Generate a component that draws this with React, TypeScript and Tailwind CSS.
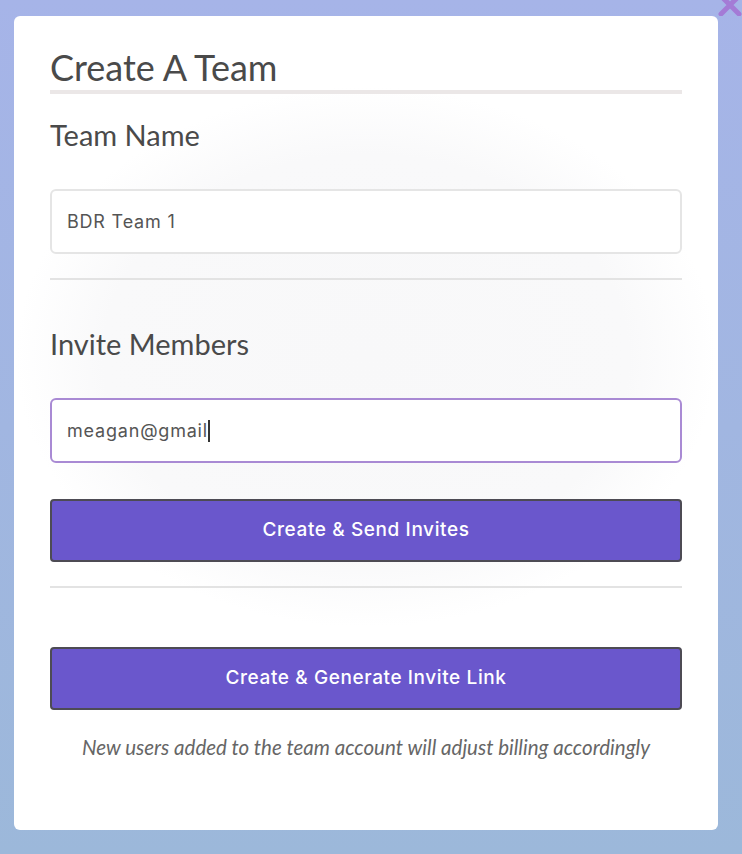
import React from "react";

export default function App() {
  return (
    <div className="relative w-[742px] h-[854px] overflow-hidden bg-[linear-gradient(to_bottom,#a6b4e8,#9cb8da)]">
      <svg className="absolute right-[0px] top-[-6px]" width="24" height="22" viewBox="0 0 24 22">
        <path d="M3 2 L21 20 M21 2 L3 20" stroke="#a47bd6" strokeWidth="5" strokeLinecap="round" />
      </svg>
      <div className="absolute left-[14px] top-[16px] w-[704px] h-[814px] rounded-[6px] bg-[radial-gradient(ellipse_350px_270px_at_50%_341px,#f8f8f9_0%,#f9f9fa_75%,#ffffff_100%)] px-[36px] pt-[30px] flex flex-col">
        <h1 className="font-['Lato',sans-serif] text-[36px] leading-[42px] text-[#4a4a4a]">Create A Team</h1>
        <div className="mt-[2px] h-[4px] bg-[#ebe7e7]" />
        <h2 className="mt-[23px] font-['Lato',sans-serif] text-[29px] leading-[35px] text-[#4a4a4a]">Team Name</h2>
        <div className="mt-[37px] h-[65px] rounded-[6px] border-2 border-[#e5e5e5] bg-white flex items-center pl-[15px] font-['Inter',sans-serif] text-[18px] tracking-[0.8px] text-[#555]">
          BDR Team 1
        </div>
        <div className="mt-[24px] h-[2px] bg-[#e3e3e3]" />
        <h2 className="mt-[46px] font-['Lato',sans-serif] text-[29px] leading-[35px] text-[#4a4a4a]">Invite Members</h2>
        <div className="mt-[37px] h-[65px] rounded-[6px] border-2 border-[#a98ad4] bg-white flex items-center pl-[15px] font-['Inter',sans-serif] text-[18px] tracking-[0.8px] text-[#555]">
          meagan@gmail<span className="inline-block w-[2px] h-[22px] bg-[#333]" />
        </div>
        <button className="mt-[36px] h-[63px] rounded-[4px] border-2 border-[#4d4b54] bg-[#6a57cc] text-white font-['Inter',sans-serif] font-medium text-[19px] tracking-[0.6px]">
          Create &amp; Send Invites
        </button>
        <div className="mt-[24px] h-[2px] bg-[#e3e3e3]" />
        <button className="mt-[59px] h-[63px] rounded-[4px] border-2 border-[#4d4b54] bg-[#6a57cc] text-white font-['Inter',sans-serif] font-medium text-[19px] tracking-[0.6px]">
          Create &amp; Generate Invite Link
        </button>
        <p className="mt-[25px] text-center italic font-['Lato',sans-serif] text-[20.5px] leading-[24px] text-[#666]">
          New users added to the team account will adjust billing accordingly
        </p>
      </div>
    </div>
  );
}
